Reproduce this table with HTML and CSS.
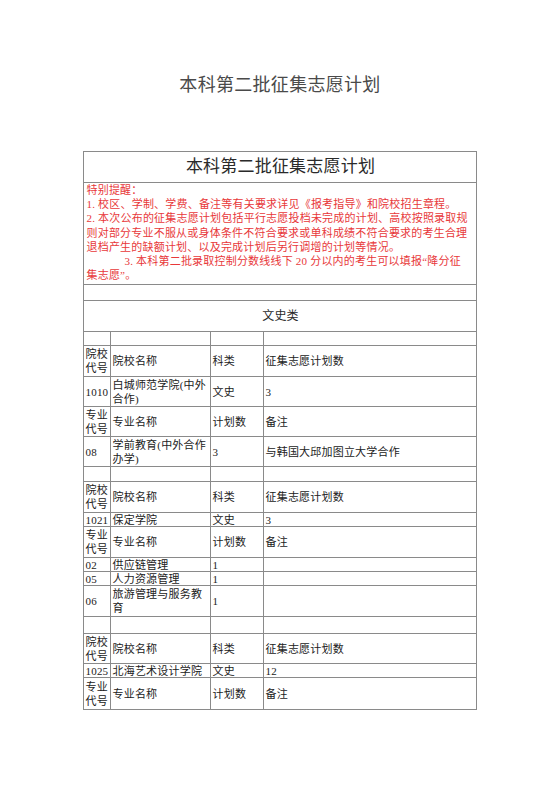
FILE: index.html
```html
<!DOCTYPE html>
<html lang="zh-CN">
<head>
<meta charset="utf-8">
<title>本科第二批征集志愿计划</title>
<link rel="stylesheet" href="styles.css">
</head>
<body>
<div class="page">
  <h1 class="doc-title">本科第二批征集志愿计划</h1>
  <table class="plan">
    <colgroup>
      <col class="c1"><col class="c2"><col class="c3"><col class="c4">
    </colgroup>
    <tr class="h31"><td colspan="4" class="tbl-title">本科第二批征集志愿计划</td></tr>
    <tr class="h102"><td colspan="4" class="notice">特别提醒：<br>1. 校区、学制、学费、备注等有关要求详见《报考指导》和院校招生章程。<br>2. 本次公布的征集志愿计划包括平行志愿投档未完成的计划、高校按照录取规<br>则对部分专业不服从或身体条件不符合要求或单科成绩不符合要求的考生合理<br>退档产生的缺额计划、以及完成计划后另行调增的计划等情况。<br><span class="indent">3. 本科第二批录取控制分数线线下 20 分以内的考生可以填报“降分征</span><br>集志愿”。</td></tr>
    <tr class="h16"><td colspan="4"></td></tr>
    <tr class="h31"><td colspan="4" class="category">文史类</td></tr>
    <tr class="h14"><td></td><td></td><td></td><td></td></tr>

    <tr class="h31"><td>院校代号</td><td>院校名称</td><td>科类</td><td>征集志愿计划数</td></tr>
    <tr class="h30"><td>1010</td><td>白城师范学院(中外合作)</td><td>文史</td><td>3</td></tr>
    <tr class="h30"><td>专业代号</td><td>专业名称</td><td>计划数</td><td>备注</td></tr>
    <tr class="h30"><td>08</td><td>学前教育(中外合作办学)</td><td>3</td><td>与韩国大邱加图立大学合作</td></tr>
    <tr class="h15"><td></td><td></td><td></td><td></td></tr>

    <tr class="h31"><td>院校代号</td><td>院校名称</td><td>科类</td><td>征集志愿计划数</td></tr>
    <tr class="h14"><td>1021</td><td>保定学院</td><td>文史</td><td>3</td></tr>
    <tr class="h31"><td>专业代号</td><td>专业名称</td><td>计划数</td><td>备注</td></tr>
    <tr class="h14"><td>02</td><td>供应链管理</td><td>1</td><td></td></tr>
    <tr class="h14"><td>05</td><td>人力资源管理</td><td>1</td><td></td></tr>
    <tr class="h31"><td>06</td><td>旅游管理与服务教育</td><td>1</td><td></td></tr>
    <tr class="h17"><td></td><td></td><td></td><td></td></tr>

    <tr class="h30"><td>院校代号</td><td>院校名称</td><td>科类</td><td>征集志愿计划数</td></tr>
    <tr class="h14"><td>1025</td><td>北海艺术设计学院</td><td>文史</td><td>12</td></tr>
    <tr class="h32"><td>专业代号</td><td>专业名称</td><td>计划数</td><td>备注</td></tr>
  </table>
</div>
</body>
</html>
```

FILE: styles.css
```css
html, body {
  margin: 0;
  padding: 0;
  background: #ffffff;
}

body {
  font-family: "Liberation Serif", "Noto Sans CJK SC", serif;
  color: #222222;
}

.page {
  width: 560px;
  padding-top: 73px;
  box-sizing: border-box;
}

.doc-title {
  margin: 0 0 54px 0;
  text-align: center;
  font-size: 18px;
  line-height: 24px;
  font-weight: normal;
  color: #4a4a4a;
  letter-spacing: 0.3px;
}

.plan {
  margin: 0 auto;
  width: 392px;
  table-layout: fixed;
  border-collapse: collapse;
  border: 1px solid #6f6f6f;
  font-size: 11px;
  line-height: 14px;
  letter-spacing: 0.2px;
}

.c1 { width: 27px; }
.c2 { width: 100px; }
.c3 { width: 53px; }
.c4 { width: 212px; }

.plan td {
  border: 1px solid #8a8a8a;
  padding: 0 0 0 1px;
  vertical-align: middle;
  text-align: left;
  word-break: break-all;
}

.h14 { height: 14px; }
.h15 { height: 15px; }
.h16 { height: 16px; }
.h17 { height: 17px; }
.h30 { height: 30px; }
.h31 { height: 31px; }
.h32 { height: 32px; }
.h102 { height: 102px; }

.plan .h14 td {
  line-height: 12px;
}

.plan td.tbl-title {
  text-align: center;
  font-size: 17px;
  line-height: 22px;
  color: #2a2a2a;
  letter-spacing: 0.2px;
}

.plan td.notice {
  color: #e8383a;
  line-height: 14.2px;
  padding: 0 0 0 2px;
  white-space: nowrap;
  vertical-align: top;
}

.indent {
  padding-left: 38px;
}

.plan td.category {
  text-align: center;
  font-size: 12px;
  color: #2a2a2a;
}
```
